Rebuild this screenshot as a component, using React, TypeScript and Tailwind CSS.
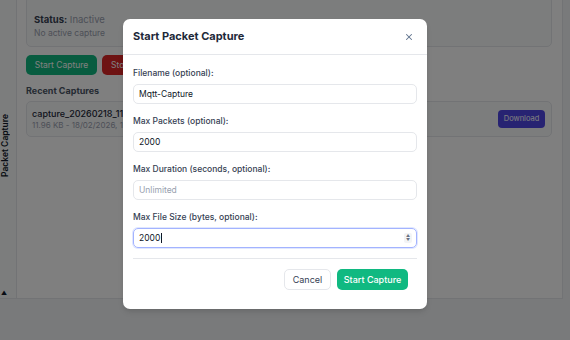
import { X } from "lucide-react";

const fields = [
  { label: "Filename (optional):", value: "Mqtt-Capture" },
  { label: "Max Packets (optional):", value: "2000" },
  { label: "Max Duration (seconds, optional):", value: "", placeholder: "Unlimited" },
];

export default function App() {
  return (
    <div className="relative h-[340px] w-[570px] overflow-hidden bg-gray-100 font-['Inter',sans-serif] text-gray-800">
      {/* page behind the dialog */}
      <div className="flex h-[299px] w-[563px] border-r border-b border-gray-200 bg-white">
        <div className="flex w-[17px] shrink-0 flex-col border-r border-gray-200 bg-gray-50">
          <div className="flex flex-1 items-center justify-start">
            <span className="rotate-180 text-[8.5px] font-semibold leading-[11px] text-gray-900 [writing-mode:vertical-rl]">
              Packet Capture
            </span>
          </div>
          <div className="h-[8px] pl-[1px] text-[6px] leading-none text-gray-900">▲</div>
        </div>

        <div className="flex-1 pl-[9px] pr-[10px]">
          <div className="-mt-[4px] rounded-[5px] border border-gray-200 bg-gray-50 px-[7px] pb-[7px] pt-[16px]">
            <p className="text-[9.5px] leading-[13px]">
              <span className="font-bold text-gray-700">Status:</span>{" "}
              <span className="text-gray-400">Inactive</span>
            </p>
            <p className="mt-[1px] text-[8.5px] leading-[12px] text-gray-400">No active capture</p>
          </div>

          <div className="mt-[8px] flex gap-[5px]">
            <button className="h-[20px] w-[71px] rounded-[5px] bg-[#10b981] text-[8.5px] text-white">Start Capture</button>
            <button className="h-[20px] w-[71px] rounded-[5px] bg-[#dc2626] text-[8.5px] text-white">Stop Capture</button>
          </div>

          <p className="mt-[9px] text-[9px] font-bold leading-[13px] text-gray-600">Recent Captures</p>

          <div className="mt-[4px] flex h-[36px] items-center justify-between rounded-[5px] border border-gray-200 bg-gray-50 pl-[5px] pr-[6px]">
            <div>
              <p className="text-[9px] font-medium leading-[13px] text-gray-800">capture_20260218_114512.pcap</p>
              <p className="text-[8px] leading-[11px] text-gray-400">11.96 KB - 18/02/2026, 11:45:12</p>
            </div>
            <button className="h-[18px] w-[47px] rounded-[4px] bg-[#4f46e5] text-[7.5px] text-white">Download</button>
          </div>
        </div>
      </div>

      {/* dialog */}
      <div className="absolute inset-0 bg-black/50 pl-[123px] pt-[19px]">
        <div className="w-[304px] rounded-[7px] bg-white shadow-md">
          <div className="flex h-[36px] items-center justify-between border-b border-gray-200 px-[10px]">
            <h2 className="text-[11px] font-bold text-gray-800">Start Packet Capture</h2>
            <X className="mr-[3px] h-[10px] w-[10px] text-slate-500" strokeWidth={2.5} />
          </div>

          <div className="px-[10px] pt-[11px] pb-[19px]">
            {fields.map((f) => (
              <div key={f.label} className="mb-[10px]">
                <label className="mb-[4px] block text-[8.5px] font-medium leading-[14px] text-gray-700">{f.label}</label>
                <input
                  type="text"
                  defaultValue={f.value}
                  placeholder={f.placeholder}
                  className="block h-[20px] w-full rounded-[5px] border border-gray-200 px-[5px] text-[8.5px] text-gray-900 outline-none placeholder:text-gray-400"
                />
              </div>
            ))}
            <div className="mb-[10px]">
              <label className="mb-[4px] block text-[8.5px] font-medium leading-[14px] text-gray-700">
                Max File Size (bytes, optional):
              </label>
              <div className="flex h-[20px] items-center rounded-[5px] border border-indigo-300 pl-[5px] pr-[4px] ring-1 ring-indigo-100">
                <span className="text-[8.5px] text-gray-900">2000</span>
                <span className="ml-[1px] h-[10px] w-[1px] bg-gray-900" />
                <span className="ml-auto flex h-[10px] w-[8px] flex-col items-center justify-center rounded-[2px] bg-gray-100 text-[4px] leading-[4px] text-gray-500">
                  <span>▲</span>
                  <span>▼</span>
                </span>
              </div>
            </div>

            <div className="flex justify-end gap-[6px] border-t border-gray-200 pr-[9px] pt-[10px]">
              <button className="h-[21px] w-[47px] rounded-[5px] border border-gray-200 bg-white text-[9px] text-gray-700">Cancel</button>
              <button className="h-[21px] w-[71px] rounded-[5px] bg-[#10b981] text-[9px] font-medium text-white">Start Capture</button>
            </div>
          </div>
        </div>
      </div>
    </div>
  );
}
